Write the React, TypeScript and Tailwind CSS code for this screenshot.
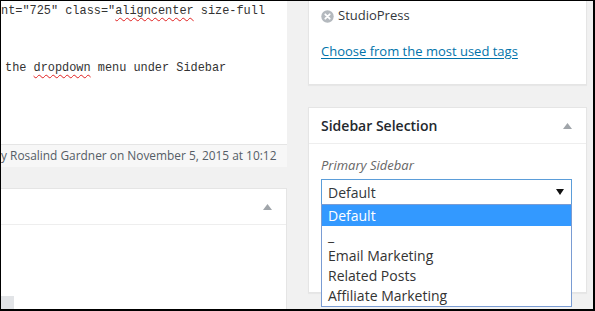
const Squiggle = ({ children }: { children: React.ReactNode }) => (
  <span className="underline decoration-wavy decoration-[#e02020] decoration-1 underline-offset-[3px]">{children}</span>
);

const UpArrow = () => (
  <svg width="9" height="6" viewBox="0 0 9 6" className="block">
    <path d="M0 6 L4.5 0 L9 6 Z" fill="#a0a5aa" />
  </svg>
);

const RemoveTag = () => (
  <svg width="13" height="13" viewBox="0 0 13 13" className="block">
    <circle cx="6.5" cy="6.5" r="6.2" fill="#b4b9be" />
    <path d="M4.3 4.3 L8.7 8.7 M8.7 4.3 L4.3 8.7" stroke="#fff" strokeWidth="1.8" strokeLinecap="round" />
  </svg>
);

const options = ["_", "Email Marketing", "Related Posts", "Affiliate Marketing"];

export default function App() {
  return (
    <div className="w-[595px] h-[311px] overflow-hidden border-l border-t border-r-2 border-b-2 border-black bg-[#f1f1f1] font-['Open_Sans',sans-serif] text-[13px] text-[#32373c]">
      <div className="flex h-full">
        {/* Left column: editor */}
        <div className="w-[286px] flex flex-col">
          <div className="h-[143px] bg-white pt-[1px] font-['Liberation_Mono',monospace] text-[11.9px] leading-[19px] text-[#333] whitespace-pre overflow-hidden">
            <div>nt="725" class="<Squiggle>aligncenter</Squiggle> size-full</div>
            <div>&nbsp;</div>
            <div>&nbsp;</div>
            <div className="ml-[4px]">the <Squiggle>dropdown</Squiggle> menu under Sidebar</div>
          </div>
          <div className="h-[23px] bg-[#f7f7f7] border-t border-[#e5e5e5] flex items-center whitespace-nowrap overflow-hidden text-[#555d66] text-[11.9px]">
            y Rosalind Gardner on November 5, 2015 at 10:12
          </div>
          <div className="mt-[21px] flex-1 bg-white border-t border-r border-[#e5e5e5] flex flex-col">
            <div className="h-[36px] border-b border-[#eee] flex items-center justify-end pr-[14px]">
              <UpArrow />
            </div>
            <div className="flex-1 flex items-end">
              <div className="w-[13px] h-[13px] bg-[#e2e4e7]" />
            </div>
          </div>
        </div>

        {/* Right column: boxes */}
        <div className="ml-[21px] w-[279px] flex flex-col">
          <div className="h-[84px] bg-white border-x border-b border-[#e5e5e5] shadow-[0_1px_1px_rgba(0,0,0,0.04)] pl-[12px] pt-[7px]">
            <div className="flex items-center gap-[4px] h-[16px]">
              <RemoveTag />
              <span className="text-[#32373c]">StudioPress</span>
            </div>
            <a className="block mt-[18px] text-[#0073aa] underline underline-offset-2 leading-[18px]">
              Choose from the most used tags
            </a>
          </div>

          <div className="mt-[22px] h-[186px] bg-white border border-[#e5e5e5] shadow-[0_1px_1px_rgba(0,0,0,0.04)] flex flex-col">
            <div className="h-[36px] border-b border-[#eee] flex items-center justify-between pl-[12px] pr-[14px]">
              <span className="text-[14px] font-semibold text-[#23282d]">Sidebar Selection</span>
              <UpArrow />
            </div>
            <div className="pl-[12px] pt-[13px]">
              <div className="italic text-[#666] leading-[17px]">Primary Sidebar</div>
              <div className="relative mt-[5px] w-[251px]">
                <div className="h-[26px] border border-[#5b9dd9] flex items-center justify-between pl-[6px] pr-[7px] text-[14px] text-[#32373c] bg-white">
                  <span>Default</span>
                  <svg width="8" height="6" viewBox="0 0 8 6">
                    <path d="M0 0 L8 0 L4 6 Z" fill="#111" />
                  </svg>
                </div>
                <div className="absolute left-0 top-[25px] w-[251px] bg-white border border-[#7a9cd3] text-[14px] text-[#333] leading-[20px] z-10">
                  <div className="bg-[#3399ff] text-white pl-[6px] h-[21px] leading-[21px]">Default</div>
                  {options.map((o) => (
                    <div key={o} className="pl-[6px] h-[20px]">{o}</div>
                  ))}
                </div>
                <div className="mt-[24px] text-[#999] text-[12px] leading-[12px]">&nbsp;</div>
              </div>
            </div>
          </div>
        </div>
      </div>
    </div>
  );
}
